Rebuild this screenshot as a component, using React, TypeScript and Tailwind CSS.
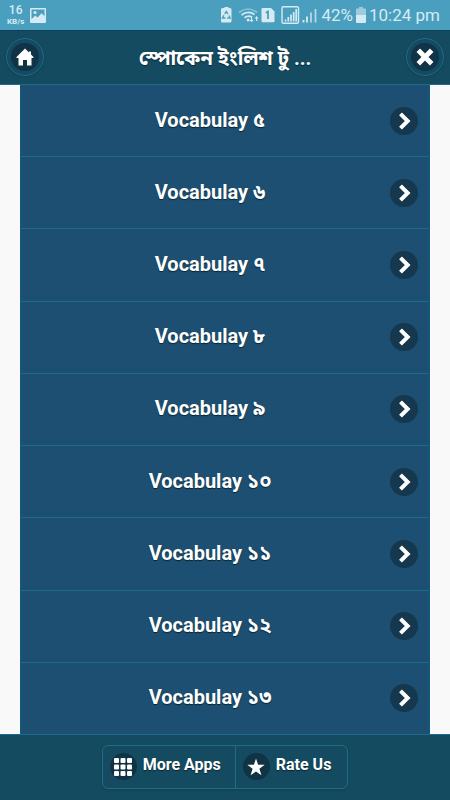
import React from 'react';

const lessons = ['৫', '৬', '৭', '৮', '৯', '১০', '১১', '১২', '১৩'];

const textShadow = '[text-shadow:0_1px_1px_#0a2433]';

type RoundProps = {
	label: string;
	children: React.ReactNode;
};

const RoundButton: React.FC<RoundProps> = ({ label, children }) => {
	return (
		<button
			type="button"
			aria-label={label}
			className="flex size-[38px] shrink-0 items-center justify-center rounded-full border border-[#1f6b8c] bg-[#144b62] shadow-sm">
			<span className="flex size-[28px] items-center justify-center rounded-full bg-[#103345]">
				{children}
			</span>
		</button>
	);
};

const StatusBar = () => {
	return (
		<div className="flex h-[30px] shrink-0 items-center justify-between bg-[#4a9fbe] pr-[10px] pl-[7px] text-[#d5ebf4]">
			<div className="flex items-center gap-[6px]">
				<div className="flex flex-col items-center">
					<span className="text-[12px] leading-[14px] font-medium">16</span>
					<span className="text-[8px] leading-[10px] font-bold">KB/s</span>
				</div>
				<svg width="16" height="15" viewBox="0 0 16 15" aria-hidden="true">
					<path
						fill="currentColor"
						fillRule="evenodd"
						d="M1 0h14a1 1 0 0 1 1 1v13a1 1 0 0 1-1 1H1a1 1 0 0 1-1-1V1a1 1 0 0 1 1-1Zm.5 1.5v9.8l3.7-3.7 2.3 2 4.2-4.3 2.8 3V1.5Z"
					/>
					<circle cx="5" cy="4.5" r="1.6" fill="currentColor" />
				</svg>
			</div>
			<div className="flex items-center">
				<svg className="shrink-0" width="98" height="20" viewBox="220 5 98 20" aria-hidden="true">
					<path
						fill="currentColor"
						d="M223.5 8h1V7h4v1h1.500q1.500 0 1.500 1.500V21q0 1.500-1.500 1.500h-7.500q-1.500 0-1.500-1.500V9.500Q221 8 222.500 8Z"
					/>
					<g fill="none" stroke="#4a9fbe" strokeWidth="1.400">
						<path d="m224.700 14 1.500-2.500 1.600 2.500M229 15.500l1 2.500h-2.700M225.500 18h-3l1.300-2.700" />
					</g>
					<g fill="none" stroke="currentColor" strokeWidth="1.700">
						<path opacity=".45" d="M239 12.500q9-7 18 0" />
						<path d="M241.500 15q6.500-5 13-.5M244.500 17.700q4-3 7.500-.5" />
					</g>
					<circle cx="248.200" cy="20" r="1.500" fill="currentColor" />
					<path
						fill="currentColor"
						d="M251 17.500h1.200v2.500h1.300l-1.900 2.300-1.900-2.300H251ZM256 21h1.200v-2.500h1.300L256.600 16l-1.900 2.500H256Z"
					/>
					<path
						fill="currentColor"
						d="M262.500 8h8.500l3.500 3.500V21q0 1.200-1.200 1.200h-10.600q-1.200 0-1.200-1.200V9.200Q261.500 8 262.500 8Z"
					/>
					<path fill="none" stroke="#4a9fbe" strokeWidth="1.800" d="m265.800 12.800 2.200-1.200V19" />
					<rect
						x="282"
						y="6.800"
						width="16.500"
						height="16.500"
						rx="1.500"
						fill="none"
						stroke="currentColor"
						strokeWidth="1.400"
					/>
					<path
						stroke="currentColor"
						strokeWidth="1.700"
						d="M285.500 21.500v-2M288.300 21.500v-4.500M291 21.500v-7M293.700 21.500v-9.500M296.200 21.500V9"
					/>
					<path stroke="currentColor" strokeWidth="1.800" d="M303.500 22.500v-2.500M307 22.500v-6" />
					<path
						stroke="currentColor"
						strokeWidth="1.800"
						opacity=".75"
						d="M311 22.500v-10M315.500 22.500V9"
					/>
				</svg>
				<span className="ml-[3px] text-[17px] leading-[30px]">42%</span>
				<svg
					className="mx-[3px] shrink-0"
					width="10"
					height="16"
					viewBox="0 0 10 16"
					aria-hidden="true">
					<path
						fill="currentColor"
						opacity=".6"
						d="M3 0h4v1.500h2q1 0 1 1V8H0V2.500q0-1 1-1h2Z"
					/>
					<path fill="currentColor" d="M0 8h10v7q0 1-1 1H1q-1 0-1-1Z" />
				</svg>
				<span className="text-[17px] leading-[30px] whitespace-nowrap">10:24 pm</span>
			</div>
		</div>
	);
};

const Header = () => {
	return (
		<header className="flex h-[55px] shrink-0 items-center justify-between border-t border-b border-t-[#0b4059] border-b-[#1f6b8c] bg-[#144b60] px-[6px] pb-[2px]">
			<RoundButton label="Home">
				<svg width="18" height="18" viewBox="0 0 18 18" aria-hidden="true">
					<path
						fill="#fff"
						d="M9 .5.5 9v1H2.500v7.500h4.500v-5.500h4v5.500h4.500V10h2V9L15 6.500V3.500h-2v1Z"
					/>
				</svg>
			</RoundButton>
			<h1
				className={`truncate pt-[2px] text-center text-[20px] leading-[26px] font-bold ${textShadow}`}>
				স্পোকেন ইংলিশ টু ...
			</h1>
			<RoundButton label="Close">
				<svg width="18" height="18" viewBox="0 0 18 18" aria-hidden="true">
					<path
						stroke="#fff"
						strokeWidth="5"
						d="m2.300 2.300 13.400 13.400M15.700 2.300 2.300 15.700"
					/>
				</svg>
			</RoundButton>
		</header>
	);
};

const LessonList = () => {
	return (
		<ul className="mx-[20px] flex flex-1 flex-col border-x border-[#0e5c80] bg-[#1c4f71]">
			{lessons.map((lesson) => (
				<li
					key={lesson}
					className="flex min-h-[70px] flex-1 border-b border-[#1f6b8c] last:border-b-0">
					<a href="#" className="flex flex-1 items-center px-[11px]">
						<span
							className={`flex-1 pr-[2px] pb-[2px] text-center text-[20px] leading-[26px] font-bold ${textShadow}`}>
							Vocabulay {lesson}
						</span>
						<span className="flex size-[28px] items-center justify-center rounded-full bg-[#15384f]">
							<svg width="14" height="18" viewBox="0 0 14 18" aria-hidden="true">
								<path
									fill="none"
									stroke="#fff"
									strokeWidth="4"
									d="m3.500 1.800 7.200 7.200-7.200 7.200"
								/>
							</svg>
						</span>
					</a>
				</li>
			))}
		</ul>
	);
};

const Footer = () => {
	return (
		<footer className="flex h-[66px] shrink-0 items-center justify-center border-t border-[#1f6b8c] bg-[#144b60] pb-[2px]">
			<div className="flex h-[44px] rounded-[6px] border border-[#1f6b8c] shadow-sm">
				<button
					type="button"
					className="flex items-center gap-[6px] border-r border-[#1f6b8c] pr-[14px] pl-[7px]">
					<span className="flex size-[27px] items-center justify-center rounded-full bg-[#103345]">
						<svg width="18" height="18" viewBox="0 0 18 18" fill="#fff" aria-hidden="true">
							{[0, 6.5, 13].map((y) =>
								[0, 6.5, 13].map((x) => (
									<rect key={`${x}-${y}`} x={x} y={y} width="5" height="5" rx="1" />
								))
							)}
						</svg>
					</span>
					<span className={`pb-[3px] text-[16px] leading-[20px] font-bold ${textShadow}`}>
						More Apps
					</span>
				</button>
				<button type="button" className="flex items-center gap-[6px] pr-[16px] pl-[7px]">
					<span className="flex size-[27px] items-center justify-center rounded-full bg-[#103345]">
						<svg width="18" height="18" viewBox="0 0 18 18" aria-hidden="true">
							<path
								fill="#fff"
								d="m9 .5 2.100 6.300h6.600l-5.300 4 2 6.500L9 13.400l-5.400 3.900 2-6.500-5.300-4h6.600Z"
							/>
						</svg>
					</span>
					<span className={`pb-[3px] text-[16px] leading-[20px] font-bold ${textShadow}`}>
						Rate Us
					</span>
				</button>
			</div>
		</footer>
	);
};

export default function App() {
	return (
		<div className="flex min-h-screen flex-col bg-[#f9f9f9] font-['Roboto','Noto_Sans_Bengali','Noto_Sans',sans-serif] text-white">
			<StatusBar />
			<Header />
			<main className="flex flex-1 flex-col">
				<LessonList />
			</main>
			<Footer />
		</div>
	);
}
